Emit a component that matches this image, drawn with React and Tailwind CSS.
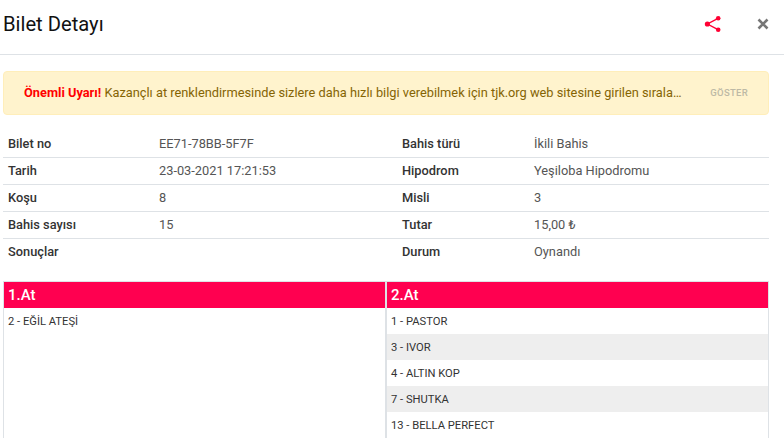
const infoRows = [
  ["Bilet no", "EE71-78BB-5F7F", "Bahis türü", "İkili Bahis"],
  ["Tarih", "23-03-2021 17:21:53", "Hipodrom", "Yeşiloba Hipodromu"],
  ["Koşu", "8", "Misli", "3"],
  ["Bahis sayısı", "15", "Tutar", "15,00 ₺"],
  ["Sonuçlar", "", "Durum", "Oynandı"],
];

const at1 = ["2 - EĞİL ATEŞİ"];
const at2 = ["1 - PASTOR", "3 - IVOR", "4 - ALTIN KOP", "7 - SHUTKA", "13 - BELLA PERFECT"];

function HorseColumn({ title, items }) {
  return (
    <div className="flex-1 min-w-0 bg-white">
      <div className="h-[26px] bg-[#ff0050] text-white text-[15px] font-medium leading-[26px] px-1">{title}</div>
      {items.map((item, i) => (
        <div
          key={item}
          className={`h-[26px] px-1 pt-px text-[11.2px] leading-[26px] text-[#333333] ${i % 2 === 1 ? "bg-[#eeeeee]" : "bg-white"}`}
        >
          {item}
        </div>
      ))}
    </div>
  );
}

export default function App() {
  return (
    <div className="h-[438px] w-[784px] overflow-hidden bg-white font-['Roboto',sans-serif]">
      <header className="h-[55px] border-b border-[#dee2e6] flex items-center justify-between pl-[3px] pr-[15px]">
        <h1 className="text-[20.2px] font-normal text-[#111111] leading-none -mt-[6px]">Bilet Detayı</h1>
        <div className="flex items-center gap-[35px] -mt-[6px]">
          <svg width="18" height="18" viewBox="0 0 18 18" className="text-[#ff0033]">
            <path d="M14.5 3.2 3.5 9 14.5 14.8" fill="none" stroke="currentColor" strokeWidth="1.4" />
            <circle cx="14.2" cy="3.2" r="2.3" fill="currentColor" />
            <circle cx="3.4" cy="9" r="2.6" fill="currentColor" />
            <circle cx="14.2" cy="14.8" r="2.3" fill="currentColor" />
          </svg>
          <svg width="12" height="12" viewBox="0 0 12 12" className="text-[#777777]">
            <path d="M1.5 1.5 10.5 10.5M10.5 1.5 1.5 10.5" fill="none" stroke="currentColor" strokeWidth="2.6" />
          </svg>
        </div>
      </header>

      <div className="mt-4 ml-[3px] w-[766px] h-11 flex items-center justify-between rounded bg-[#fff3cd] border border-[#ffeeba] pl-5 pr-5 text-[12.8px] text-[#856404]">
        <p className="whitespace-nowrap">
          <strong className="font-bold text-[#ff0000]">Önemli Uyarı!</strong>{" "}
          Kazançlı at renklendirmesinde sizlere daha hızlı bilgi verebilmek için tjk.org web sitesine girilen sırala…
        </p>
        <span className="text-[9.5px] font-medium tracking-[0.3px] text-[#bdb9a5]">GÖSTER</span>
      </div>

      <div className="mt-4 ml-[3px] w-[766px]">
        {infoRows.map((row, i) => (
          <div
            key={row[0]}
            className={`h-[27px] flex items-center px-[5px] text-[12.8px] border-b ${i < infoRows.length - 1 ? "border-[#dee2e6]" : "border-transparent"}`}
          >
            <span className="w-[151px] font-medium text-[#333333]">{row[0]}</span>
            <span className="w-[243px] text-[#555555]">{row[1]}</span>
            <span className="w-[132px] font-medium text-[#333333]">{row[2]}</span>
            <span className="flex-1 text-[#555555]">{row[3]}</span>
          </div>
        ))}
      </div>

      <div className="mt-[15px] ml-[3px] w-[766px] flex border-t border-l border-r border-[#dee2e6] gap-[2px] bg-[#dee2e6]">
        <HorseColumn title="1.At" items={at1} />
        <HorseColumn title="2.At" items={at2} />
      </div>
    </div>
  );
}
